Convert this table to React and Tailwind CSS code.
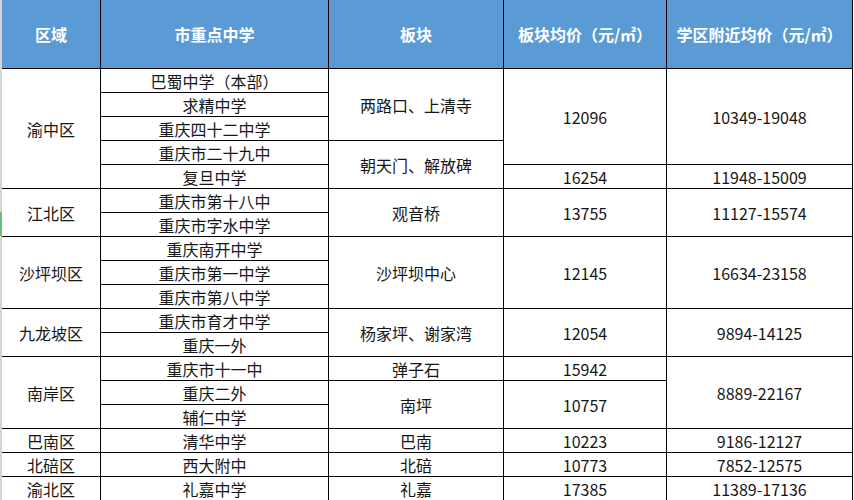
import React from "react";

const headers = ["区域", "市重点中学", "板块", "板块均价（元/㎡）", "学区附近均价（元/㎡）"];

// [text, startRow, span] per column; rows counted from 1 under the header
const quyu = [
  ["渝中区", 1, 5],
  ["江北区", 6, 2],
  ["沙坪坝区", 8, 3],
  ["九龙坡区", 11, 2],
  ["南岸区", 13, 3],
  ["巴南区", 16, 1],
  ["北碚区", 17, 1],
  ["渝北区", 18, 1],
];

const xuexiao = [
  "巴蜀中学（本部）",
  "求精中学",
  "重庆四十二中学",
  "重庆市二十九中",
  "复旦中学",
  "重庆市第十八中",
  "重庆市字水中学",
  "重庆南开中学",
  "重庆市第一中学",
  "重庆市第八中学",
  "重庆市育才中学",
  "重庆一外",
  "重庆市十一中",
  "重庆二外",
  "辅仁中学",
  "清华中学",
  "西大附中",
  "礼嘉中学",
];

const bankuai = [
  ["两路口、上清寺", 1, 3],
  ["朝天门、解放碑", 4, 2],
  ["观音桥", 6, 2],
  ["沙坪坝中心", 8, 3],
  ["杨家坪、谢家湾", 11, 2],
  ["弹子石", 13, 1],
  ["南坪", 14, 2],
  ["巴南", 16, 1],
  ["北碚", 17, 1],
  ["礼嘉", 18, 1],
];

const junjia = [
  ["12096", 1, 4],
  ["16254", 5, 1],
  ["13755", 6, 2],
  ["12145", 8, 3],
  ["12054", 11, 2],
  ["15942", 13, 1],
  ["10757", 14, 2],
  ["10223", 16, 1],
  ["10773", 17, 1],
  ["17385", 18, 1],
];

const fujin = [
  ["10349-19048", 1, 4],
  ["11948-15009", 5, 1],
  ["11127-15574", 6, 2],
  ["16634-23158", 8, 3],
  ["9894-14125", 11, 2],
  ["8889-22167", 13, 3],
  ["9186-12127", 16, 1],
  ["7852-12575", 17, 1],
  ["11389-17136", 18, 1],
];

function Cell({ text, col, row, span }) {
  return (
    <div
      className="bg-white flex items-center justify-center text-[16px] text-[#161616] leading-none"
      style={{ gridColumn: col, gridRow: `${row + 1} / span ${span}` }}
    >
      {text}
    </div>
  );
}

export default function App() {
  return (
    <div
      className="w-[854px] h-[500px] overflow-hidden bg-white flex"
      style={{ fontFamily: '"Noto Sans CJK SC", "Noto Sans", sans-serif' }}
    >
      {/* 表格左侧行号边 */}
      <div className="w-[2px] flex flex-col">
        <div className="h-[212px] bg-[#d4d4d4]" />
        <div className="h-[24px] bg-[#6fbf73]" />
        <div className="flex-1 bg-[#d4d4d4]" />
      </div>

      <div className="grid grid-cols-[98px_227px_174px_162px_185px] grid-rows-[68px_repeat(18,23px)] gap-px bg-black pr-px h-[501px]">
        {headers.map((h) => (
          <div
            key={h}
            className="bg-[#5b9bd5] flex items-center justify-center text-white font-bold text-[16px] whitespace-nowrap"
          >
            {h}
          </div>
        ))}

        {quyu.map(([t, r, s]) => (
          <Cell key={t} text={t} col={1} row={r} span={s} />
        ))}
        {xuexiao.map((t, i) => (
          <Cell key={t} text={t} col={2} row={i + 1} span={1} />
        ))}
        {bankuai.map(([t, r, s]) => (
          <Cell key={t} text={t} col={3} row={r} span={s} />
        ))}
        {junjia.map(([t, r, s]) => (
          <Cell key={t} text={t} col={4} row={r} span={s} />
        ))}
        {fujin.map(([t, r, s]) => (
          <Cell key={t} text={t} col={5} row={r} span={s} />
        ))}
      </div>
      <div className="flex-1 bg-white" />
    </div>
  );
}
